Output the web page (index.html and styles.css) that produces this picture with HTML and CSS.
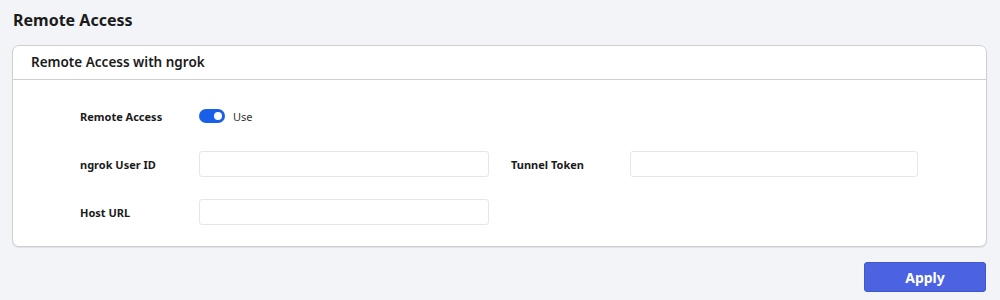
FILE: index.html
```html
<!DOCTYPE html>
<html lang="en">
<head>
  <meta charset="UTF-8" />
  <title>Remote Access</title>
  <link rel="stylesheet" href="styles.css">
</head>
<body>

  <div class="page">
    <h1>Remote Access</h1>

    <div class="card">
      <div class="card-head">Remote Access with ngrok</div>
      <div class="card-body">
        <div class="row">
          <label class="label">Remote Access</label>
          <label class="switch">
            <span class="track"><span class="knob"></span></span>
            <span class="switch-text">Use</span>
          </label>
        </div>
        <div class="row">
          <label class="label">ngrok User ID</label>
          <input type="text" class="field" />
          <label class="label label-2">Tunnel Token</label>
          <input type="text" class="field field-2" />
        </div>
        <div class="row">
          <label class="label">Host URL</label>
          <input type="text" class="field" />
        </div>
      </div>
    </div>

    <div class="actions">
      <button class="btn-apply">Apply</button>
    </div>
  </div>

</body>
</html>
```

FILE: styles.css
```css
* {
  margin: 0; padding: 0; box-sizing: border-box;
}
body {
  font-family: 'Noto Sans', sans-serif;
  background: #f3f4f8;
  color: #1b1b1b;
}
.page {
  padding: 8px 13px 0 12px;
}
h1 {
  font-size: 16px;
  font-weight: 700;
  line-height: 24px;
  margin-left: 1px;
  margin-bottom: 13px;
}
.card {
  background: #fff;
  border: 1px solid #cfcfd3;
  border-radius: 7px;
  box-shadow: 0 1px 1px rgba(0,0,0,0.08);
}
.card-head {
  height: 34px;
  line-height: 33px;
  padding-left: 18px;
  font-size: 13.5px;
  font-weight: 600;
  border-bottom: 1px solid #cfcfd3;
}
.card-body {
  padding: 23px 0 21px 67px;
  display: flex;
  flex-direction: column;
  gap: 22px;
}
.row {
  display: flex;
  align-items: center;
  height: 26px;
}
.label {
  width: 119px;
  font-size: 11px;
  font-weight: 700;
}
.label-2 {
  margin-left: 22px;
}
.field {
  width: 290px;
  height: 26px;
  border: 1px solid #e6e6ea;
  border-radius: 3px;
  background: #fff;
  outline: none;
}
.field-2 {
  width: 288px;
}
.switch {
  display: flex;
  align-items: center;
  gap: 8px;
}
.track {
  width: 26px;
  height: 14px;
  border-radius: 7px;
  background: #1a5fe8;
  position: relative;
}
.knob {
  position: absolute;
  top: 3px;
  right: 3px;
  width: 8px;
  height: 8px;
  border-radius: 50%;
  background: #fff;
}
.switch-text {
  font-size: 11px;
  color: #333;
}
.actions {
  display: flex;
  justify-content: flex-end;
  margin-top: 15px;
  margin-right: 1px;
}
.btn-apply {
  width: 122px;
  height: 30px;
  background: #4b63e0;
  color: #fff;
  border: 1px solid #3f56cf;
  border-radius: 3px;
  font-family: 'Noto Sans', sans-serif;
  font-size: 14px;
  font-weight: 700;
  cursor: pointer;
}
```
